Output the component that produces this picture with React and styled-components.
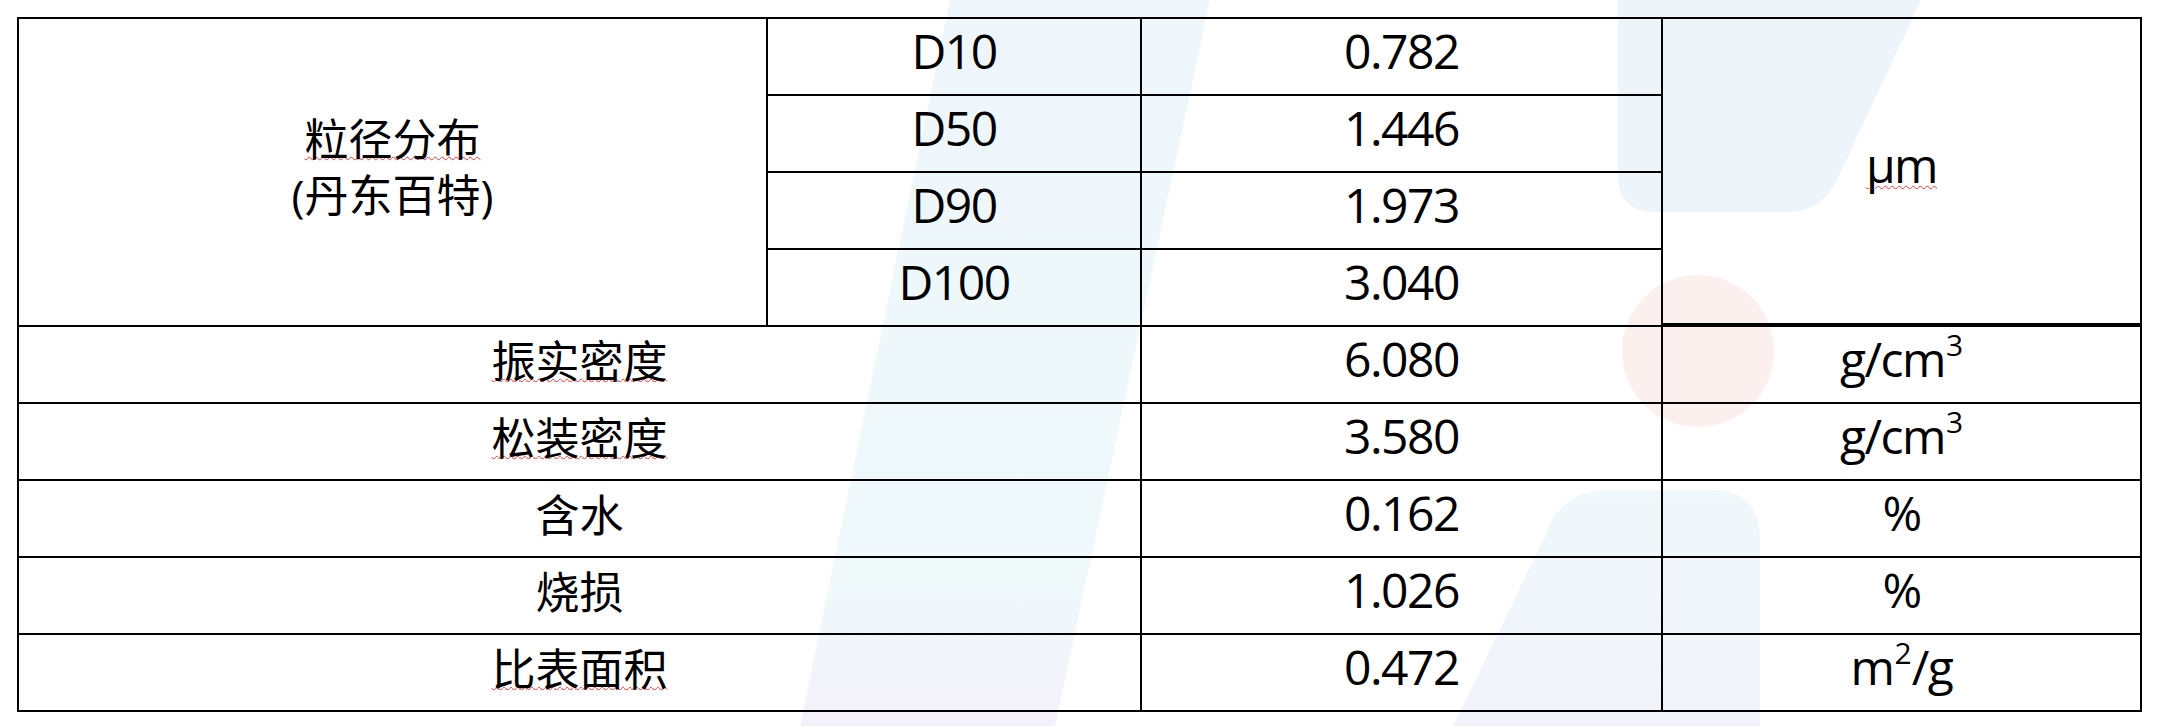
import React from "react";
import styled, { createGlobalStyle } from "styled-components";

const GlobalStyle = createGlobalStyle`
  html, body {
    margin: 0;
    padding: 0;
    background: #fff;
  }
`;

const Page = styled.div`
  position: relative;
  width: 2160px;
  height: 726px;
  box-sizing: border-box;
  padding: 17px 0 0 17px;
  overflow: hidden;
  background: #fff;
  color: #000;
  font-family: "Open Sans", "Noto Sans CJK SC", sans-serif;
`;

const Watermark = styled.svg`
  position: absolute;
  left: 0;
  top: 0;
  width: 2160px;
  height: 726px;
  pointer-events: none;
`;

const Sheet = styled.div`
  position: relative;
  display: grid;
  grid-template-columns: 749px 374px 521px 479px;
  grid-template-rows: repeat(9, 77px);
  width: fit-content;
  border-left: 2px solid #000;
  border-top: 2px solid #000;
`;

const Cell = styled.div`
  box-sizing: border-box;
  grid-column: span ${(p) => p.$cols || 1};
  grid-row: span ${(p) => p.$rows || 1};
  border-right: 2px solid #000;
  border-bottom: ${(p) => (p.$thick ? 4 : 2)}px solid #000;
  display: flex;
  align-items: center;
  justify-content: center;
  padding-bottom: ${(p) => p.$lift ?? 12}px;
  font-size: 48px;
  line-height: 1.2;
  letter-spacing: -1.5px;
  text-align: center;
  white-space: nowrap;
`;

const Zh = styled.span`
  font-size: 44px;
  letter-spacing: 0;
  line-height: 56px;
`;

const Spell = styled.span`
  text-decoration-line: underline;
  text-decoration-style: wavy;
  text-decoration-color: #e23b3b;
  text-decoration-thickness: 1px;
  text-underline-offset: ${(p) => p.$offset ?? 2}px;
`;

const Sup = styled.span`
  position: relative;
  top: -14px;
  margin-left: 1px;
  font-size: 30px;
  letter-spacing: 0;
`;

const sizes = [
  ["D10", "0.782"],
  ["D50", "1.446"],
  ["D90", "1.973"],
  ["D100", "3.040"],
];

const props = [
  { name: "振实密度", spell: true, value: "6.080", unit: <>g/cm<Sup>3</Sup></> },
  { name: "松装密度", spell: true, value: "3.580", unit: <>g/cm<Sup>3</Sup></> },
  { name: "含水", value: "0.162", unit: "%" },
  { name: "烧损", value: "1.026", unit: "%" },
  { name: "比表面积", spell: true, value: "0.472", unit: <>m<Sup>2</Sup>/g</> },
];

const Logo = () => (
  <Watermark viewBox="0 0 2160 726">
    <defs>
      <linearGradient id="band" x1="0" y1="0" x2="0" y2="1">
        <stop offset="0" stopColor="#eef6fb" />
        <stop offset="0.8" stopColor="#eff9fa" />
        <stop offset="1" stopColor="#f5f1fb" />
      </linearGradient>
      <linearGradient id="foot" x1="0" y1="0" x2="0" y2="1">
        <stop offset="0" stopColor="#eff8fb" />
        <stop offset="1" stopColor="#f2f3fb" />
      </linearGradient>
    </defs>
    <path d="M950 0 L1210 0 L1055 726 L800 726 Z" fill="url(#band)" />
    <path
      d="M1618 0 L1921 0 L1838 178 Q1822 212 1788 212 L1655 212 Q1618 212 1618 175 Z"
      fill="#eef5fa"
    />
    <circle cx="1698" cy="351" r="76" fill="#fcf0ef" />
    <path
      d="M1548 530 Q1562 490 1610 490 L1712 490 Q1760 490 1760 540 L1760 726 L1453 726 Z"
      fill="url(#foot)"
    />
  </Watermark>
);

const App = () => (
  <Page>
    <GlobalStyle />
    <Logo />
    <Sheet>
      <Cell $rows={4} $lift={10}>
        <Zh>
          <Spell $offset={0}>粒径分布</Spell>
          <br />
          (丹东百特)
        </Zh>
      </Cell>
      {sizes.map(([label, value], i) => (
        <React.Fragment key={label}>
          <Cell>{label}</Cell>
          <Cell>{value}</Cell>
          {i === 0 && (
            <Cell $rows={4} $thick>
              <Spell>μm</Spell>
            </Cell>
          )}
        </React.Fragment>
      ))}
      {props.map((row) => (
        <React.Fragment key={row.name}>
          <Cell $cols={2} $lift={8}>
            <Zh>{row.spell ? <Spell $offset={0}>{row.name}</Spell> : row.name}</Zh>
          </Cell>
          <Cell>{row.value}</Cell>
          <Cell>{row.unit}</Cell>
        </React.Fragment>
      ))}
    </Sheet>
  </Page>
);

export default App;
